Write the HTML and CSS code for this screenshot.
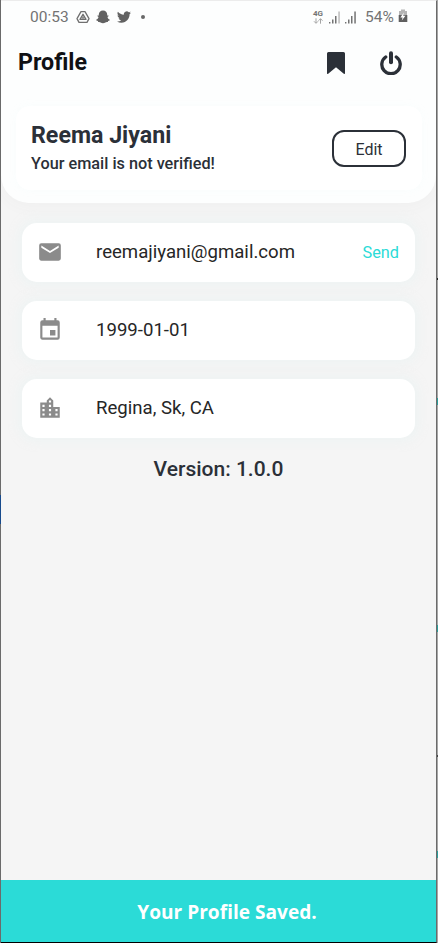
FILE: index.html
```html
<!DOCTYPE html>
<html lang="en">
<head>
<meta charset="utf-8">
<title>Profile</title>
<link rel="stylesheet" href="styles.css">
</head>
<body>
<div class="screen">
  <header class="top">
    <div class="status">
      <span class="clock">00:53</span>
      <svg class="s-drive" viewBox="0 0 14 14" width="14" height="14" fill="none" stroke="#707070"><path d="M5 1.600h4l4 7-2 3.800H3L1 8.600z" stroke-width="1.300" stroke-linejoin="round"/><path d="M7 4.300 10 9.400H4z" stroke-width="1.300" stroke-linejoin="round"/><path d="M7 6.500 8 8.200H6z" stroke-width=".8"/></svg>
      <svg class="s-snap" viewBox="0 0 14 14" width="14" height="14" fill="#626262"><path d="M7 .4c2.600 0 4.200 1.700 4.200 4v1.200l1.200-.1c.5.400.1 1-.9 1.500.3 1.300 1.100 2.200 2.300 2.700.2.700-.7 1.100-1.700 1.300l-.3 1c-1.200-.2-1.700-.1-2.400.5-1.400 1-3.400 1-4.800 0-.7-.6-1.200-.7-2.400-.5l-.3-1C.900 10.800 0 10.400.200 9.700 1.400 9.200 2.200 8.300 2.500 7 1.500 6.500 1.100 5.900 1.600 5.500l1.200.1V4.400C2.800 2.100 4.400.4 7 .4z"/></svg>
      <svg class="s-bird" viewBox="0 0 24 24" width="14" height="14" fill="#626262"><path d="M23.950 4.570a10 10 0 0 1-2.820.77 4.960 4.960 0 0 0 2.160-2.720c-.95.550-2 .95-3.120 1.180a4.920 4.920 0 0 0-8.380 4.480C7.690 8.100 4.070 6.130 1.640 3.160a4.920 4.920 0 0 0 1.520 6.570 4.900 4.900 0 0 1-2.230-.61v.06c0 2.380 1.700 4.370 3.950 4.820a5 5 0 0 1-2.210.09 4.940 4.940 0 0 0 4.600 3.420A9.870 9.870 0 0 1 0 19.540a14 14 0 0 0 7.550 2.210c9.050 0 14-7.500 14-13.980l-.02-.63a9.940 9.940 0 0 0 2.420-2.570z"/></svg>
      <i class="dot"></i>
      <span class="net"><b>4G</b><svg viewBox="0 0 10 6" width="10" height="6" fill="none" stroke="#a5a5a5"><path d="M3 .3v4.800M1 3.300l2 2 2-2M7.500 5.700V.8M5.500 2.700l2-2 2 2"/></svg></span>
      <svg class="sig" viewBox="0 0 12 13" width="12" height="13"><path fill="#737373" d="M0 11h1.400v1.500H0zM3 8.500h1.500v4H3zM6 5h1.500v7.500H6z"/><path fill="#bcbcbc" d="M9.300.5h1.500v12H9.300z"/></svg>
      <svg class="sig2" viewBox="0 0 12 13" width="12" height="13"><path fill="#737373" d="M0 11h1.400v1.500H0zM3 8.500h1.500v4H3zM6 5h1.500v7.500H6zM9.300.5h1.500v12H9.300z"/></svg>
      <span class="pct">54%</span>
      <svg class="bat" viewBox="0 0 10 14" width="10" height="14"><path fill="#b5b5b5" d="M3 .5h4V2h2v5H1V2h2z"/><path fill="#5f5f5f" d="M.7 6h8.600v7H.7z"/><path fill="#fff" d="M5.800 3.500 2.400 8.400h2.200l-.8 3.200 3.700-4.900H5.200z"/></svg>
    </div>
    <div class="bar">
      <h1>Profile</h1>
      <svg class="mark" viewBox="0 0 18 22" width="18" height="22" fill="#2b3038"><path d="M1.500 0h15A1.500 1.500 0 0 1 18 1.500v19.700c0 .8-.6 1-1.200.5L9 15.200l-7.800 6.500c-.6.500-1.200.3-1.200-.5V1.500A1.500 1.500 0 0 1 1.500 0z"/></svg>
      <svg class="power" viewBox="0 0 22 24" width="22" height="24" fill="none" stroke="#2b3038" stroke-linecap="round"><path d="M5.700 6a9.200 9.200 0 1 0 10.600 0" stroke-width="3.300"/><path d="M11 2.200v9" stroke-width="4"/></svg>
    </div>
    <section class="person">
      <div>
        <h2>Reema Jiyani</h2>
        <p>Your email is not verified!</p>
      </div>
      <button class="edit">Edit</button>
    </section>
  </header>
  <main class="list">
    <div class="card">
      <svg viewBox="0 0 24 24" width="26" height="26" fill="#8b8b8b"><path d="M20 4H4a2 2 0 0 0-2 2v12c0 1.100.9 2 2 2h16a2 2 0 0 0 2-2V6a2 2 0 0 0-2-2zm0 4-8 5-8-5V6l8 5 8-5z"/></svg>
      <span class="value">reemajiyani@gmail.com</span>
      <a class="send">Send</a>
    </div>
    <div class="card">
      <svg viewBox="0 0 24 24" width="26" height="26" fill="#8b8b8b"><path d="M17 12h-5v5h5v-5zM16 1v2H8V1H6v2H5a2 2 0 0 0-2 2v14c0 1.100.9 2 2 2h14a2 2 0 0 0 2-2V5a2 2 0 0 0-2-2h-1V1h-2zm3 18H5V8h14v11z"/></svg>
      <span class="value">1999-01-01</span>
    </div>
    <div class="card">
      <svg viewBox="0 0 24 24" width="26" height="26" fill="#8b8b8b"><path d="M15 11V5l-3-3-3 3v2H3v14h18V11h-6zm-8 8H5v-2h2v2zm0-4H5v-2h2v2zm0-4H5V9h2v2zm6 8h-2v-2h2v2zm0-4h-2v-2h2v2zm0-4h-2V9h2v2zm0-4h-2V5h2v2zm6 12h-2v-2h2v2zm0-4h-2v-2h2v2z"/></svg>
      <span class="value">Regina, Sk, CA</span>
    </div>
  </main>
  <p class="version">Version: 1.0.0</p>
  <footer class="toast">Your Profile Saved.</footer>
</div>
</body>
</html>
```
FILE: styles.css
```css
* { box-sizing: border-box; }
/* Window edges that show on either side of the app screen */
body {
  margin: 0;
  background:
    linear-gradient(#174a8c, #174a8c) 0 495px / 1px 29px no-repeat,
    linear-gradient(#222, #222) 437px 278px / 1px 2px no-repeat,
    linear-gradient(#2b9c98, #2b9c98) 437px 398px / 1px 7px no-repeat,
    linear-gradient(#2b9c98, #2b9c98) 437px 625px / 1px 7px no-repeat,
    linear-gradient(#444, #444) 437px 755px / 1px 2px no-repeat,
    linear-gradient(#2b9c98, #2b9c98) 437px 851px / 1px 7px no-repeat,
    linear-gradient(90deg, #6b6b6b 1px, #a6a6a6 1px);
  font-family: Roboto, "Liberation Sans", sans-serif;
}
h1, h2, p { margin: 0; white-space: nowrap; }
svg { display: block; flex: none; }
.screen {
  width: 436px;
  height: 943px;
  margin-left: 1px;
  display: flex;
  flex-direction: column;
  background: #f5f5f5;
  border: 1px solid #6b6b6b;
  border-left: 0;
  border-top-color: #eee;
  border-bottom-color: #000;
}
.top {
  height: 202px;
  flex: none;
  background: #fdfefe;
  border-radius: 0 0 28px 28px;
  box-shadow: 0 4px 16px rgba(80, 110, 100, .03);
}
.status {
  height: 32px;
  padding-left: 29px;
  display: flex;
  align-items: center;
  color: #737373;
  font-size: 15.5px;
}
.clock { width: 46px; }
.s-snap { margin-left: 6px; }
.s-bird { margin: -1px 0 0 7px; }
.dot { width: 4px; height: 4px; margin: -1px 0 0 10px; border-radius: 50%; background: #686868; }
.net { width: 11px; margin-left: 168px; }
.net b { display: block; font-size: 8px; line-height: 8px; }
.sig { margin-left: 5px; }
.sig2 { margin-left: 4px; }
.pct { width: 29px; margin-left: 8px; }
.bat { margin: -2px 0 0 4px; }
.bar {
  height: 60px;
  display: flex;
  align-items: center;
  padding-left: 17px;
}
h1 { width: 309px; margin-top: -2px; font-size: 23.2px; font-weight: 700; color: #101114; }
.power { margin-left: 35px; }
.person {
  height: 84px;
  margin: 13px 14px 0 15px;
  padding: 0 16px 0 15px;
  display: flex;
  align-items: center;
  justify-content: space-between;
  border-radius: 14px;
  background: #fff;
  box-shadow: 0 0 8px rgba(200, 240, 240, .08);
  color: #2b3038;
}
h2 { padding-top: 1px; font-size: 23.2px; line-height: 30px; font-weight: 700; }
.person p { font-size: 16.25px; line-height: 27px; font-weight: 500; }
.edit {
  width: 74px;
  height: 37px;
  margin-top: 0;
  padding: 2px 0 0;
  border: 2px solid #2b3038;
  border-radius: 12px;
  background: #fff;
  color: #2b3038;
  font: 400 16px Roboto, sans-serif;
}
.list {
  display: flex;
  flex-direction: column;
  gap: 19px;
  padding: 20px 21px 0;
}
.card {
  height: 59px;
  padding: 0 16px 1px 15px;
  display: flex;
  align-items: center;
  border-radius: 15px;
  background: #fff;
  box-shadow: 0 0 9px 4px rgba(233, 243, 243, .5);
}
.value { margin: -1px 0 0 33px; font-size: 18.6px; color: #262626; white-space: nowrap; }
.send { margin-left: auto; font-size: 16.3px; color: #2bdbd7; }
.version {
  margin-top: 18px;
  text-align: center;
  font-size: 21px;
  line-height: 27px;
  font-weight: 500;
  color: #2b3038;
}
.toast {
  height: 62px;
  margin-top: auto;
  padding: 2px 0 0 17px;
  display: flex;
  align-items: center;
  justify-content: center;
  background: #2bdbd7;
  color: #fff;
  font: 700 19.1px "Open Sans", "Noto Sans", sans-serif;
}
```
